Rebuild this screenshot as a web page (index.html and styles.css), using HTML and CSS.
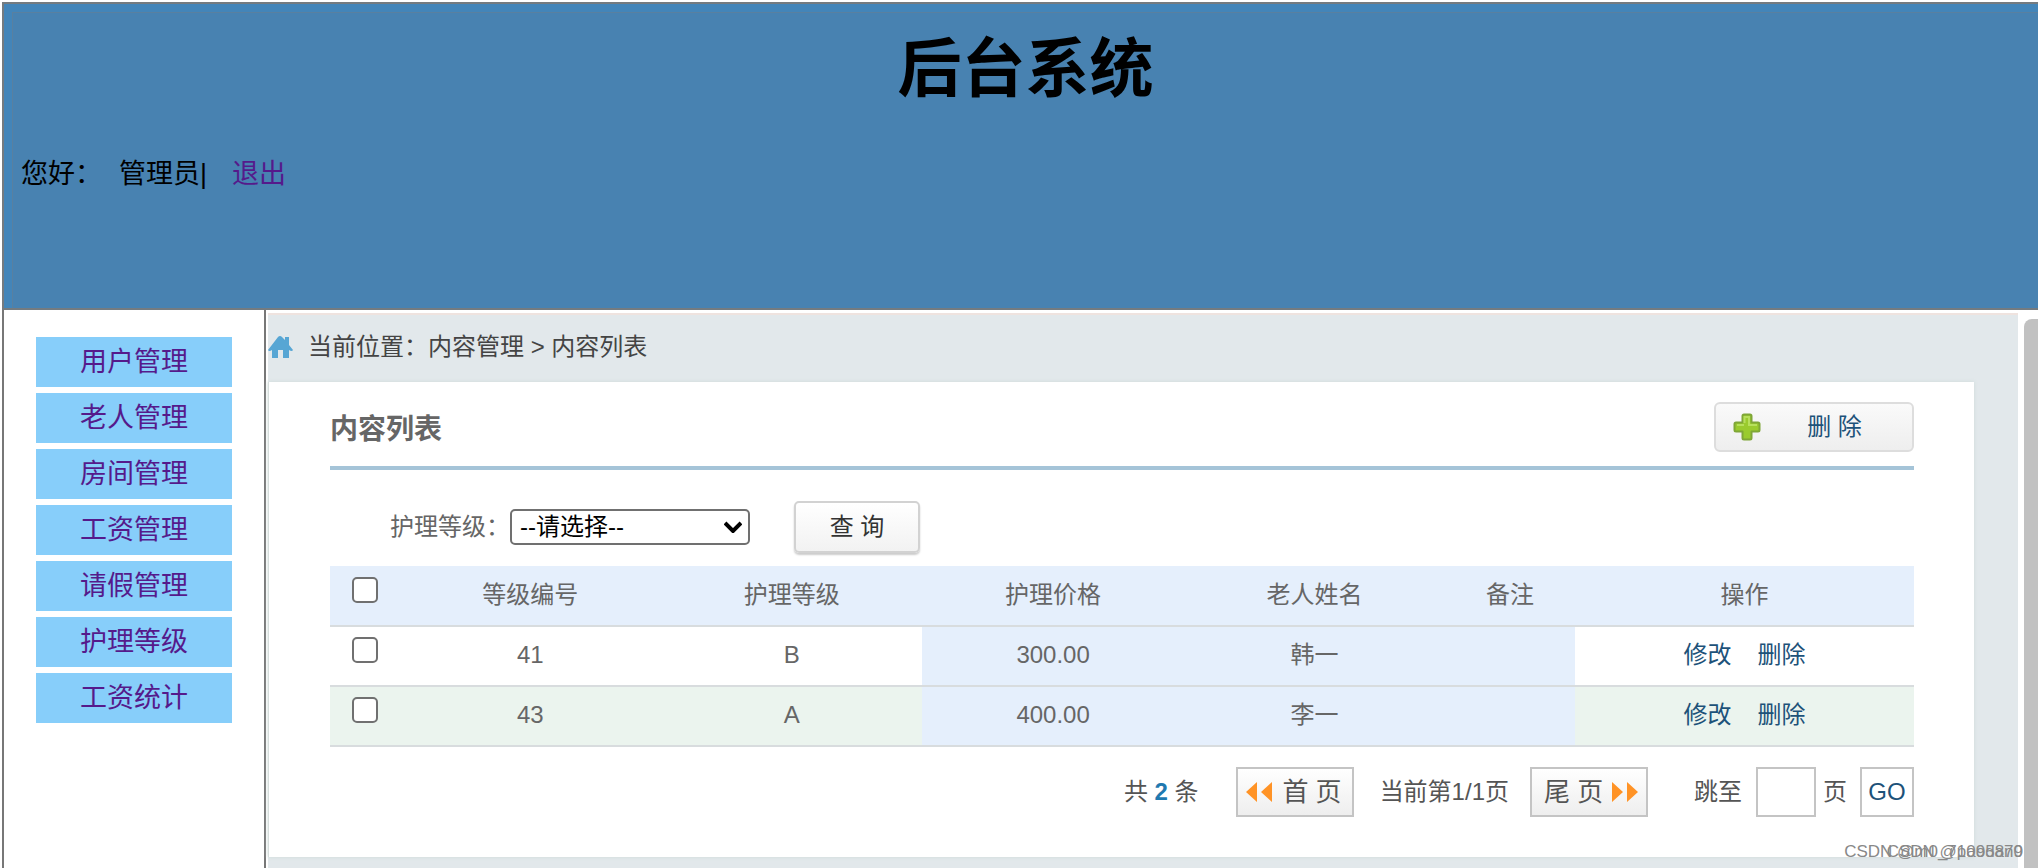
FILE: index.html
```html
<!DOCTYPE html>
<html lang="zh-CN">
<head>
<meta charset="utf-8">
<title>后台系统</title>
<link rel="stylesheet" href="styles.css">
</head>
<body>
<header class="banner">
  <div class="banner-inner">
    <h1>后台系统</h1>
    <p class="hello"><span>您好：</span><span>管理员|</span><a href="#logout">退出</a></p>
  </div>
</header>
<div class="frames">
  <nav class="side">
    <a href="#users">用户管理</a>
    <a href="#elders">老人管理</a>
    <a href="#rooms">房间管理</a>
    <a href="#salary">工资管理</a>
    <a href="#leave">请假管理</a>
    <a href="#care">护理等级</a>
    <a href="#stats">工资统计</a>
  </nav>
  <main class="content">
    <div class="crumbs">
      <svg class="home" viewBox="0 0 25 22" aria-hidden="true"><path fill="#57a6d4" d="M0 14 L10 1 Q12 -1 14 1 L17 4 V1 H21 V9 L25 14 Q24 16 21 14 V22 H15 V14 H10 V22 H4 V14 Q1 16 0 14Z"/></svg>
      <span>当前位置：内容管理 &gt; 内容列表</span>
    </div>
    <section class="panel">
      <div class="panel-head">
        <h2>内容列表</h2>
        <button class="remove" type="button">
          <svg class="plus" viewBox="0 0 28 28" aria-hidden="true"><path fill="#9acb2e" stroke="#7fa637" stroke-width="2" stroke-linejoin="round" d="M11 1.500H17Q18.500 1.500 18.500 3V9.500H25Q26.500 9.500 26.500 11V17Q26.500 18.500 25 18.500H18.500V25Q18.500 26.500 17 26.500H11Q9.500 26.500 9.500 25V18.500H3Q1.500 18.500 1.500 17V11Q1.500 9.500 3 9.500H9.500V3Q9.500 1.500 11 1.500Z"/><path fill="none" stroke="#b7e05c" stroke-width="2" d="M11.500 10V4H16V12H24M4 12H11"/></svg>
          <span>删 除</span>
        </button>
      </div>
      <form class="search">
        <label for="level">护理等级：</label>
        <span class="select-wrap"><select id="level"><option>--请选择--</option></select><svg class="arrow" viewBox="0 0 18 12" aria-hidden="true"><path fill="none" stroke="#000" stroke-width="4" d="M1 2L9 10L17 2"/></svg></span>
        <button class="query" type="button">查 询</button>
      </form>
      <table class="list">
        <colgroup><col class="c-check"><col class="c-wide"><col class="c-wide"><col class="c-wide"><col class="c-wide"><col class="c-note"><col></colgroup>
        <thead>
          <tr><th><input type="checkbox" aria-label="全选"></th><th>等级编号</th><th>护理等级</th><th>护理价格</th><th>老人姓名</th><th>备注</th><th>操作</th></tr>
        </thead>
        <tbody>
          <tr><td><input type="checkbox" aria-label="选择 41"></td><td>41</td><td>B</td><td class="tint">300.00</td><td class="tint">韩一</td><td class="tint"></td><td><a href="#edit41">修改</a><a href="#del41">删除</a></td></tr>
          <tr><td><input type="checkbox" aria-label="选择 43"></td><td>43</td><td>A</td><td class="tint">400.00</td><td class="tint">李一</td><td class="tint"></td><td><a href="#edit43">修改</a><a href="#del43">删除</a></td></tr>
        </tbody>
      </table>
      <div class="pager">
        <span class="total">共 <b>2</b> 条</span>
        <button class="page-btn" type="button"><svg viewBox="0 0 26 20" aria-hidden="true"><path fill="#ff9326" d="M11 0V20L0 10ZM26 0V20L15 10Z"/></svg><span>首 页</span></button>
        <span class="current">当前第1/1页</span>
        <button class="page-btn last" type="button"><span>尾 页</span><svg viewBox="0 0 26 20" aria-hidden="true"><path fill="#ff9326" d="M0 0V20L11 10ZM15 0V20L26 10Z"/></svg></button>
        <label for="jump">跳至</label>
        <input class="jump" id="jump" type="text">
        <span class="unit">页</span>
        <button class="go" type="button">GO</button>
      </div>
    </section>
  </main>
  <div class="scroll"><div class="thumb"></div></div>
</div>
<div class="marks"><span class="mark">CSDN @m0_71095879</span><span class="mark">CSDN @paodan0</span></div>
</body>
</html>
```
FILE: styles.css
```css
* { box-sizing: border-box; }
body {
  margin: 0;
  padding: 2px 0 0 2px;
  height: 100vh;
  overflow: hidden;
  display: flex;
  flex-direction: column;
  background: #fff;
  font-family: "Liberation Sans", "Noto Sans CJK SC", sans-serif;
  font-size: 24px;
  line-height: 36px;
  color: #666;
}
h1, h2, p { margin: 0; font-weight: bold; }
a { text-decoration: none; }
button, input, select { font: inherit; color: inherit; margin: 0; }
svg { display: block; flex: none; }

.banner {
  border: 2px solid #747b80;
  border-right: 0;
  background: #4385b9;
  padding: 8px 0 0 8px;
}
.banner-inner {
  height: 296px;
  border: 1px solid #5980a0;
  border-width: 1px 0 0 1px;
  background: #4882b1;
  color: #000;
  padding: 6px 8px;
}
h1 { font-size: 64px; line-height: 100px; text-align: center; }
.hello { display: flex; gap: 25px; margin-top: 35px; font-size: 27px; line-height: 40px; font-weight: normal; }
.hello span:first-child { margin-right: -8px; }
.hello a { color: #551a8b; }

.frames { flex: 1; display: flex; min-height: 0; }
.side {
  width: 264px;
  border: 2px solid #777;
  border-width: 0 2px;
  padding: 27px 32px;
  display: flex;
  flex-direction: column;
  gap: 6px;
}
.side a { height: 50px; background: #87cefa; color: #551a8b; font-size: 27px; line-height: 50px; text-align: center; }

.content { flex: 1; margin: 3px 0 0 2px; background: #e2e8eb; border-top: 2px solid #efe3df; }
.crumbs { height: 67px; padding-bottom: 4px; display: flex; align-items: center; gap: 15px; color: #444; }
.home { width: 25px; height: 22px; }
.panel { margin-right: 44px; padding: 18px 60px 40px 61px; min-height: 475px; background: #fff; border-left: 1px solid #d5dddb; box-shadow: 0 0 4px #cddbd8; }
.panel-head { display: flex; justify-content: space-between; height: 70px; border-bottom: 4px solid #a5c4d8; }
h2 { font-size: 28px; line-height: 60px; }
.remove {
  width: 200px; height: 50px; margin-top: 2px; padding: 0 16px 0 17px; display: flex; align-items: center;
  border: 2px solid #ddd; border-radius: 6px; background: linear-gradient(#fafafa, #eee); color: #1d5279;
}
.remove span { flex: 1; text-align: center; padding-left: 12px; }
.plus { width: 28px; height: 28px; }

.search { display: flex; align-items: center; height: 96px; padding: 30px 0 12px 60px; color: #666; }
.select-wrap { position: relative; width: 240px; }
select { appearance: none; display: block; width: 100%; height: 36px; padding: 0 8px; border: 2px solid #707070; border-radius: 5px; background: #fff; color: #000; line-height: 30px; }
.arrow { position: absolute; right: 8px; top: 12px; width: 18px; height: 12px; pointer-events: none; }
.query { width: 126px; height: 52px; margin-left: 44px; padding: 0; border: 2px solid #d2d2d2; border-radius: 5px; background: linear-gradient(#fff, #f2f2f2); box-shadow: 0 2px 2px #ccc; color: #333; }

.list { width: 100%; table-layout: fixed; border-collapse: collapse; text-align: center; }
.c-check { width: 4.4%; }
.c-wide { width: 16.5%; }
.c-note { width: 8.2%; }
th, td { height: 60px; padding: 0 0 2px; font-weight: normal; border-bottom: 2px solid #d8dcde; }
th { background: #e5effc; }
tbody tr:nth-child(even) { background: #ebf4ee; }
.tint { background: #e5effc; }
.list a { color: #1d5279; margin: 0 13px; }
.list input { appearance: none; display: block; width: 26px; height: 26px; margin: 0 auto 10px; border: 2px solid #707070; border-radius: 5px; background: #fff; }

.pager { display: flex; align-items: center; justify-content: flex-end; margin-top: 20px; color: #555; }
.total b { color: #1f79b0; }
.page-btn, .go, .jump { height: 50px; border: 2px solid #c4c4c4; border-radius: 0; padding: 0; background: #fff; }
.page-btn { width: 118px; display: flex; align-items: center; justify-content: space-between; padding: 0 10px 0 8px; background: linear-gradient(#fff, #eee); font-size: 26px; }
.page-btn svg { width: 26px; height: 20px; }
.total { margin-right: 37px; }
.current { margin: 0 21px 0 26px; }
.last { padding: 0 8px 0 12px; }
.pager label { margin-left: 46px; }
.jump { width: 60px; margin: 0 7px 0 14px; }
.unit { margin-right: 13px; }
.go { width: 54px; color: #1d5279; }

.scroll { width: 20px; padding: 9px 0 0 6px; background: #fff; }
.thumb { height: 100%; background: #c1c1c1; border-radius: 8px 0 0 0; }
.marks { position: absolute; right: 15px; bottom: 1px; display: grid; font-size: 17px; line-height: 30px; color: #888; }
.mark { grid-area: 1 / 1; text-align: right; }
```
